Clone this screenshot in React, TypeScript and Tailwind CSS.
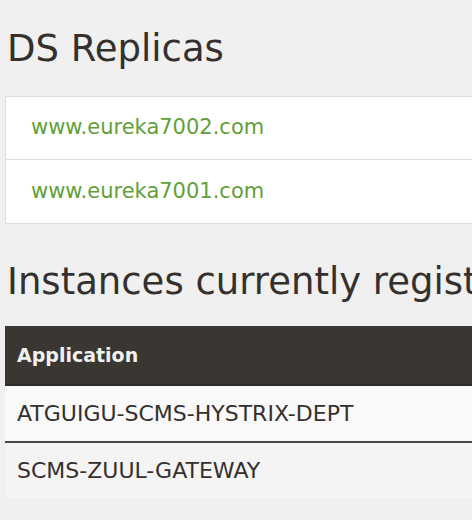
export default function App() {
  return (
    <div className="w-[472px] h-[520px] overflow-hidden bg-[#f0f0f0]">
      <div className="w-[700px] pl-[5px]">
        <h2 className="pt-[27px] pl-[2px] text-[37px] leading-[44px] text-[#34302d] whitespace-nowrap" style={{ fontFamily: '"DejaVu Sans", sans-serif' }}>
          DS Replicas
        </h2>
        <ul className="mt-[25px] border border-[#dddddd] bg-white">
          <li className="h-[63px] flex items-center pl-[25px] border-b border-[#dddddd] text-[21px] text-[#62a03a]" style={{ fontFamily: '"DejaVu Sans", sans-serif' }}>
            www.eureka7002.com
          </li>
          <li className="h-[63px] flex items-center pl-[25px] text-[21px] text-[#62a03a]" style={{ fontFamily: '"DejaVu Sans", sans-serif' }}>
            www.eureka7001.com
          </li>
        </ul>
        <h2 className="pt-[36px] pl-[2px] text-[37px] leading-[44px] text-[#34302d] whitespace-nowrap" style={{ fontFamily: '"DejaVu Sans", sans-serif' }}>
          Instances currently registered with Eureka
        </h2>
        <table className="mt-[22px] w-full border-collapse" style={{ fontFamily: '"DejaVu Sans", sans-serif' }}>
          <thead>
            <tr className="bg-[#3a3632] text-[#f1f1f1] h-[59px] border-b-2 border-[#2e2a27]">
              <th className="text-left pl-[12px] font-bold text-[19px]">Application</th>
            </tr>
          </thead>
          <tbody>
            <tr className="bg-[#f9f9f9] h-[57px] border-b-2 border-[#4a4745]">
              <td className="pl-[12px] text-[22px] text-[#34302d]">ATGUIGU-SCMS-HYSTRIX-DEPT</td>
            </tr>
            <tr className="bg-[#f4f4f4] h-[56px]">
              <td className="pl-[12px] text-[22px] text-[#34302d]">SCMS-ZUUL-GATEWAY</td>
            </tr>
          </tbody>
        </table>
      </div>
    </div>
  );
}
